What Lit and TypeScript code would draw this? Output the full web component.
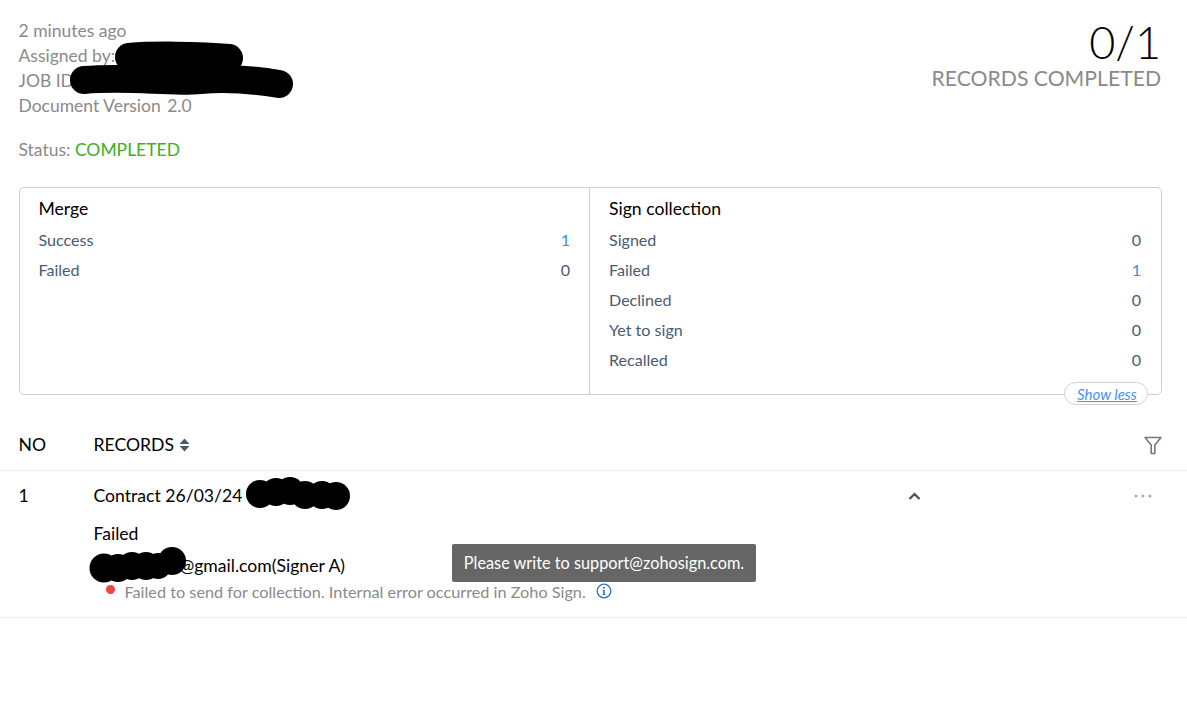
import { LitElement, html, css, svg } from "lit";
import { customElement } from "lit/decorators.js";

const merge = [
  { label: "Success", value: "1", link: true },
  { label: "Failed", value: "0", link: false },
];
const sign = [
  { label: "Signed", value: "0", link: false },
  { label: "Failed", value: "1", link: true },
  { label: "Declined", value: "0", link: false },
  { label: "Yet to sign", value: "0", link: false },
  { label: "Recalled", value: "0", link: false },
];

const blobs: [number, number, number][] = [
  [260, 494, 14], [276, 492, 14], [290, 491, 14], [305, 495, 14], [322, 495, 14], [336, 496, 14],
  [104, 568, 14.5], [118, 568, 14], [132, 566, 14], [146, 566, 14], [158, 566, 13], [172, 561, 14],
];

@customElement("app-root")
export class AppRoot extends LitElement {
  static styles = css`
    :host { display: block; position: relative; width: 1187px; height: 717px; overflow: hidden; background: #fff; font-family: Lato, sans-serif; color: #000; }
    .top { display: flex; justify-content: space-between; padding: 18px 26px 0 18.5px; height: 187px; box-sizing: border-box; }
    .meta { font-size: 17.5px; line-height: 25px; color: #8a8a8a; }
    .status { margin-top: 19px; }
    .green { color: #3cb01e; }
    .ver { margin-left: 2px; }
    .progress { text-align: right; }
    .count { font-size: 45px; font-weight: 300; line-height: 46px; margin-top: 1px; color: #000; }
    .rc { font-size: 21.2px; line-height: 26px; color: #8a8a8a; }
    .card { position: relative; display: flex; margin: 0 25px 0 19px; height: 208px; box-sizing: border-box; border: 1px solid #d0d0d0; border-radius: 5px; }
    .col { box-sizing: border-box; padding: 9px 20px 0 19px; }
    .col.a { width: 570px; border-right: 1px solid #d0d0d0; padding: 9px 19px 0 18.5px; }
    .col.b { flex: 1; }
    .col h3 { margin: 0 0 4px; font-size: 17.6px; font-weight: 400; line-height: 24px; color: #000; }
    .row { display: flex; justify-content: space-between; font-size: 16.1px; line-height: 30px; color: #4b5b6e; }
    .blue { color: #2f93e0; }
    .pill { position: absolute; right: 13px; bottom: -11px; width: 84px; height: 23px; box-sizing: border-box; padding-left: 2px; border: 1px solid #d2d2d2; border-radius: 12px; background: #fff; display: flex; align-items: center; justify-content: center; font-size: 15px; font-style: italic; color: #4b8ff0; text-decoration: underline; }
    .thead { display: flex; align-items: center; height: 76px; padding: 24px 25px 0 18.5px; box-sizing: border-box; border-bottom: 1px solid #ececec; font-size: 17.6px; }
    .no { width: 75px; flex: none; }
    .thead .grow { flex: 1; display: flex; align-items: center; gap: 5px; }
    .filter { display: block; margin-top: 1px; }
    .trow { display: flex; height: 147px; box-sizing: border-box; padding: 12px 25px 0 18.5px; border-bottom: 1px solid #ececec; font-size: 17.6px; line-height: 25px; }
    .body { flex: 1; }
    .head { display: flex; align-items: center; height: 25px; }
    .title { width: 814px; flex: none; }
    .chev { display: block; }
    .more { display: block; margin-left: auto; margin-right: 10px; }
    .failed { margin-top: 13px; }
    .email { margin-top: 7px; padding-left: 86px; }
    .err { display: flex; align-items: center; font-size: 16.25px; line-height: 20px; color: #8a8a8a; margin-top: 4px; padding-left: 12px; }
    .dot { width: 9px; height: 9px; border-radius: 50%; background: #ef4444; margin: -6px 10px 0 0; flex: none; }
    .info { margin: -2px 0 0 10px; display: block; }
    .tip { position: absolute; left: 452px; top: 544px; width: 304px; height: 38px; box-sizing: border-box; padding-bottom: 2px; border-radius: 2px; background: #666; color: #fff; font-size: 16.3px; display: flex; align-items: center; justify-content: center; }
    .redact { position: absolute; left: 0; top: 0; pointer-events: none; display: block; }
  `;

  private rows(items: { label: string; value: string; link: boolean }[]) {
    return items.map(
      (r) => html`<div class="row"><span>${r.label}</span><span class=${r.link ? "blue" : ""}>${r.value}</span></div>`
    );
  }

  render() {
    return html`
      <div class="top">
        <div class="meta">
          <div>2 minutes ago</div>
          <div>Assigned by:</div>
          <div>JOB ID</div>
          <div>Document Version <span class="ver">2.0</span></div>
          <div class="status">Status: <span class="green">COMPLETED</span></div>
        </div>
        <div class="progress">
          <div class="count">0/1</div>
          <div class="rc">RECORDS COMPLETED</div>
        </div>
      </div>
      <div class="card">
        <div class="col a"><h3>Merge</h3>${this.rows(merge)}</div>
        <div class="col b"><h3>Sign collection</h3>${this.rows(sign)}</div>
        <div class="pill">Show less</div>
      </div>
      <div class="thead">
        <div class="no">NO</div>
        <div class="grow">
          RECORDS
          <svg width="11" height="14" viewBox="0 0 11 14"><path d="M5.5 0.5 10.5 6H.5zM5.5 13.5 .5 8h10z" fill="#4b5b6e"/></svg>
        </div>
        <svg class="filter" width="18" height="19" viewBox="0 0 18 19" fill="none" stroke="#6e7a88" stroke-width="1.6"><path d="M1 1.5h16l-6.2 7.5v8.5H7.2V9z" stroke-linejoin="round"/></svg>
      </div>
      <div class="trow">
        <div class="no">1</div>
        <div class="body">
          <div class="head">
            <div class="title">Contract 26/03/24</div>
            <svg class="chev" width="13" height="10" viewBox="0 0 13 10" fill="none"><path d="M1.5 8 6.5 3l5 5" stroke="#3f4f60" stroke-width="2.2"/></svg>
            <svg class="more" width="18" height="4" viewBox="0 0 18 4" fill="#a4abb4"><circle cx="2" cy="2" r="1.5"/><circle cx="9" cy="2" r="1.5"/><circle cx="16" cy="2" r="1.5"/></svg>
          </div>
          <div class="failed">Failed</div>
          <div class="email">@gmail.com(Signer A)</div>
          <div class="err">
            <span class="dot"></span>
            Failed to send for collection. Internal error occurred in Zoho Sign.
            <svg class="info" width="16" height="16" viewBox="0 0 16 16" fill="none"><circle cx="8" cy="8" r="6.8" stroke="#2f74c8" stroke-width="1.3"/><path d="M8 7v4.4" stroke="#2f74c8" stroke-width="1.6"/><path d="M6.6 7.2H8M6.6 11.5h2.8" stroke="#2f74c8" stroke-width="1"/><circle cx="8" cy="4.7" r="1" fill="#2f74c8"/></svg>
          </div>
        </div>
      </div>
      <div class="tip">Please write to support@zohosign.com.</div>
      <svg class="redact" width="1187" height="717" viewBox="0 0 1187 717" fill="#000">
        <path d="M129 57C150 55 200 55 229 58" fill="none" stroke="#000" stroke-linecap="round" stroke-width="28"/>
        <path d="M84 80C130 76 170 83 200 80C225 78 255 80 279 84" fill="none" stroke="#000" stroke-linecap="round" stroke-width="28"/>
        ${blobs.map(([x, y, r]) => svg`<circle cx=${x} cy=${y} r=${r} />`)}
      </svg>
    `;
  }
}
